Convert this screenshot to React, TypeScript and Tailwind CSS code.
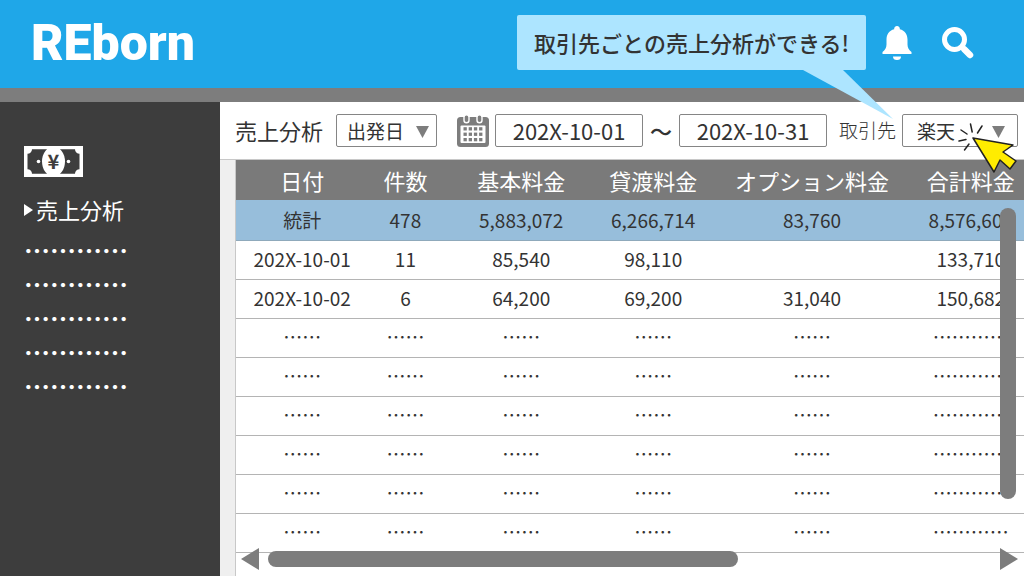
import { useState } from 'react';

const COLUMNS = [
  { label: '日付', width: 'w-[16.8%]' },
  { label: '件数', width: 'w-[9.4%]' },
  { label: '基本料金', width: 'w-[20%]' },
  { label: '貸渡料金', width: 'w-[13.5%]' },
  { label: 'オプション料金', width: 'w-[26.8%]' },
  { label: '合計料金', width: 'w-[13.5%]' },
];

const TOTALS = ['統計', '478', '5,883,072', '6,266,714', '83,760', '8,576,600'];

const PLACEHOLDER = ['……', '……', '……', '……', '……', '…………'];

const ROWS = [
  ['202X-10-01', '11', '85,540', '98,110', '', '133,710'],
  ['202X-10-02', '6', '64,200', '69,200', '31,040', '150,682'],
  ...Array.from({ length: 6 }, () => PLACEHOLDER),
];

function BellIcon() {
  return (
    <svg width="30" height="34" viewBox="0 0 30 34" fill="white">
      <path d="M15 0a2.800 2.800 0 0 1 2.800 3.200C23 4.500 25.500 8.500 25.500 13.500v5c0 3.500 1.500 5.500 4 7.500V28H.5v-2C3 24 4.500 22 4.500 18.500v-5C4.500 8.500 7 4.500 12.200 3.200A2.800 2.800 0 0 1 15 0z" />
      <path d="M11 30.500h8a4 3.500 0 0 1-8 0z" />
    </svg>
  );
}

function SearchIcon() {
  return (
    <svg width="32" height="32" viewBox="0 0 32 32" fill="none" stroke="white">
      <circle cx="12.500" cy="12.500" r="10" strokeWidth="5" />
      <path d="M19.500 19.500L24 24" strokeWidth="5" />
      <path d="M22.500 22.500L28 28" strokeWidth="6.500" strokeLinecap="round" />
    </svg>
  );
}

function CalendarIcon() {
  return (
    <svg width="32" height="34" viewBox="0 0 32 34" className="shrink-0">
      <rect x="0" y="3" width="32" height="30" rx="3.500" fill="#7d7d7d" />
      <rect x="3.500" y="11.500" width="25" height="17.500" rx="1" fill="white" />
      {[13.2, 18.6, 24].map((y) =>
        [6.5, 11.7, 16.9, 22.1].map((x) => (
          <rect key={`${x}-${y}`} x={x} y={y} width="3.300" height="3.300" fill="#7d7d7d" />
        ))
      )}
      {[9.5, 22.5].map((x) => (
        <rect key={x} x={x - 2.5} y="0.700" width="5" height="8" rx="2.500" fill="#7d7d7d" stroke="white" strokeWidth="1.400" />
      ))}
    </svg>
  );
}

function BillIcon() {
  return (
    <svg width="59" height="31" viewBox="0 0 59 31">
      <rect width="59" height="31" fill="white" />
      <path d="M8 3.300H51a4.500 4.500 0 0 0 4.500 4.500V23.200a4.500 4.500 0 0 0-4.500 4.500H8a4.500 4.500 0 0 0-4.500-4.500V7.800a4.500 4.500 0 0 0 4.500-4.500z" fill="#3d3d3d" />
      <ellipse cx="29.500" cy="15.500" rx="11.500" ry="15" fill="white" />
      <circle cx="14.500" cy="15.500" r="1.800" fill="white" />
      <circle cx="44.500" cy="15.500" r="1.800" fill="white" />
      <text x="29.500" y="22.500" textAnchor="middle" fontSize="20" fontWeight="700" fill="#3d3d3d">
        ¥
      </text>
    </svg>
  );
}

function Triangle({ points }: { points: string }) {
  return (
    <svg width="18" height="22" viewBox="0 0 18 22">
      <polygon points={points} fill="#7d7d7d" />
    </svg>
  );
}

function ClickCursor() {
  return (
    <svg width="66" height="58" viewBox="0 0 66 58" className="pointer-events-none absolute top-[7px] left-[53px] z-10">
      <g stroke="#222" strokeWidth="1.500" strokeLinecap="round">
        <path d="M6 9l6 4M15.500 3l1.700 8M27 5l-4.500 7M4 20l7-1.500M9.500 29l4.500-6" />
      </g>
      <polygon
        points="18,17 58,24 48,31 61,40 55,48 45,39 39,51"
        fill="#ffec00"
        stroke="#222"
        strokeWidth="1.500"
        strokeLinejoin="round"
      />
    </svg>
  );
}

function SelectBox({
  label,
  value,
  className,
  padding = 'pl-[10px]',
  arrow = 'right-2',
}: {
  label: string;
  value: string;
  className: string;
  padding?: string;
  arrow?: string;
}) {
  return (
    <div className={`relative shrink-0 ${className}`}>
      <select
        aria-label={label}
        className={`h-[33px] w-full appearance-none rounded-xs border border-[#858585] bg-white text-[19px] leading-[28px] text-[#333] ${padding}`}
      >
        <option>{value}</option>
      </select>
      <svg width="13" height="12" viewBox="0 0 13 12" className={`pointer-events-none absolute top-[12px] ${arrow}`}>
        <polygon points="0,0 13,0 6.500,12" fill="#7d7d7d" />
      </svg>
    </div>
  );
}

function DateBox({ label, value, onChange }: { label: string; value: string; onChange: (v: string) => void }) {
  return (
    <input
      type="text"
      aria-label={label}
      value={value}
      onChange={(e) => onChange(e.target.value)}
      className="h-[33px] w-[148px] shrink-0 rounded-xs border border-[#858585] bg-white text-center text-[22px] text-[#333]"
    />
  );
}

function Header() {
  return (
    <header className="flex h-[88px] items-center bg-[#1fa7e8] pr-[50px] pb-[3px] pl-[31px]">
      <a href="#" className="font-[family-name:Roboto,sans-serif] text-[50px] leading-none font-black text-white">
        REborn
      </a>
      <div className="relative ml-auto rounded-xs bg-[#ade5ff] px-[17px] py-[11px] text-[22px] leading-[33px] font-medium whitespace-nowrap text-[#333]">
        取引先ごとの売上分析ができる!
        <svg width="90" height="49" viewBox="0 0 90 49" className="absolute top-full right-[-27px] z-20">
          <polygon points="0,0 40,0 90,49" fill="#ade5ff" />
        </svg>
      </div>
      <button type="button" aria-label="通知" className="ml-4">
        <BellIcon />
      </button>
      <button type="button" aria-label="検索" className="ml-[30px]">
        <SearchIcon />
      </button>
    </header>
  );
}

function Sidebar() {
  return (
    <aside className="w-[220px] shrink-0 bg-[#3d3d3d] pt-11 pl-6 text-white">
      <BillIcon />
      <nav className="mt-4 flex flex-col">
        <a href="#" className="flex h-[33px] items-center text-[22px]">
          <svg width="12" height="12" viewBox="0 0 12 12">
            <polygon points="0,0 9,6 0,12" fill="white" />
          </svg>
          売上分析
        </a>
        <div className="mt-[7px] flex flex-col">
          {Array.from({ length: 5 }, (_, i) => (
            <a key={i} href="#" className="h-[34px] text-[26px] leading-[34px] font-bold">
              …………
            </a>
          ))}
        </div>
      </nav>
    </aside>
  );
}

function Toolbar() {
  const [from, setFrom] = useState('202X-10-01');
  const [to, setTo] = useState('202X-10-31');

  return (
    <div className="flex h-[58px] items-center border-b border-[#c8c8c8] bg-white pl-[15px] whitespace-nowrap text-[#333]">
      <h1 className="text-[22px]">売上分析</h1>
      <SelectBox label="日付の種類" value="出発日" className="ml-[13px] w-[101px]" />
      <div className="ml-5 flex items-center gap-[6px]">
        <CalendarIcon />
        <DateBox label="開始日" value={from} onChange={setFrom} />
        <span className="px-px text-[22px] font-medium">～</span>
        <DateBox label="終了日" value={to} onChange={setTo} />
      </div>
      <span className="ml-3 text-[19px] font-light">取引先</span>
      <div className="relative ml-[6px] shrink-0">
        <SelectBox label="取引先" value="楽天" className="w-[116px]" padding="pl-[14px]" arrow="right-[13px]" />
        <ClickCursor />
      </div>
    </div>
  );
}

function SalesTable() {
  return (
    <table className="w-full table-fixed border-collapse text-center text-[19px] whitespace-nowrap text-[#333]">
      <thead>
        <tr className="h-10 bg-[#7a7a7a] text-[22px] leading-[33px] text-white">
          {COLUMNS.map((col) => (
            <th key={col.label} scope="col" className={`p-0 font-normal ${col.width}`}>
              {col.label}
            </th>
          ))}
        </tr>
      </thead>
      <tbody>
        <tr className="h-10 border-b border-[#8fa9bb] bg-[#97bedb]">
          {TOTALS.map((cell, i) => (
            <td key={i} className="p-0">
              {cell}
            </td>
          ))}
        </tr>
        {ROWS.map((row, r) => (
          <tr key={r} className="h-[39px] border-b border-[#b4b4b4]">
            {row.map((cell, i) => (
              <td key={i} className="p-0">
                {cell}
              </td>
            ))}
          </tr>
        ))}
      </tbody>
    </table>
  );
}

export default function App() {
  return (
    <div
      lang="ja"
      className="flex min-h-screen flex-col overflow-hidden bg-white font-['Noto_Sans_CJK_JP',sans-serif]"
    >
      <Header />
      <div className="h-[14px] bg-[#7d7d7d]" />
      <div className="flex flex-1">
        <Sidebar />
        <main className="flex min-w-0 flex-1 flex-col">
          <Toolbar />
          <div className="flex-1 bg-[#efefef] pl-[15px]">
            <div className="relative h-full border-l border-[#c8c8c8] bg-white">
              <SalesTable />
              {/* scrollbars float over the table */}
              <div className="absolute top-12 right-2 bottom-[77px] w-4 rounded-full bg-[#7d7d7d]" />
              <div className="absolute right-[6px] bottom-[6px] left-[5px] flex items-center">
                <button type="button" aria-label="左へスクロール">
                  <Triangle points="18,0 18,22 0,11" />
                </button>
                <div className="ml-[9px] h-4 w-[60.500%] rounded-full bg-[#7d7d7d]" />
                <button type="button" aria-label="右へスクロール" className="ml-auto">
                  <Triangle points="0,0 0,22 18,11" />
                </button>
              </div>
            </div>
          </div>
        </main>
      </div>
    </div>
  );
}
